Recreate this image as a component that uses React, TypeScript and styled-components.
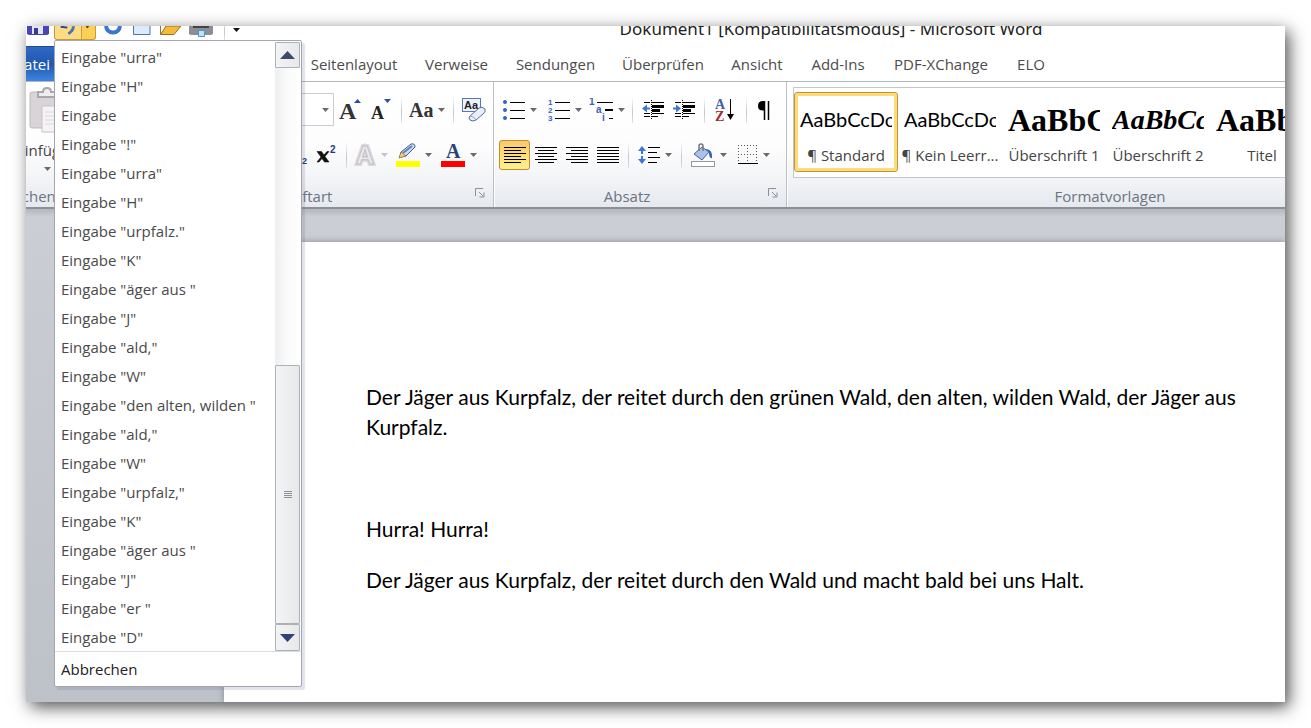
import React from "react";
import styled, { createGlobalStyle, css } from "styled-components";

const Global = createGlobalStyle`
  * { box-sizing: border-box; }
  body { margin: 0; background: #fff; font-family: "Open Sans", sans-serif; font-size: 15px; color: #444; }
  button { font: inherit; color: inherit; border: 0; background: none; padding: 0; }
`;

const Backdrop = styled.div`
  min-height: 100vh;
  padding: 26px;
  display: flex;
  overflow: hidden;
`;

const AppWindow = styled.div`
  position: relative;
  flex: 1;
  min-width: 0;
  display: flex;
  flex-direction: column;
  background: #fff;
  box-shadow: 4px 5px 16px rgba(0, 0, 0, 0.68);
`;

const TitleBar = styled.header`
  height: 15px;
  display: flex;
  align-items: flex-end;
  overflow: hidden;
`;

const QuickAccess = styled.div`
  flex: none;
  width: 351px;
  height: 15px;
  display: flex;
  align-items: flex-end;
  gap: 4px;
`;

const QuickButton = styled.button<{ $w?: number }>`
  flex: none;
  width: ${(p) => p.$w ?? 25}px;
  height: 15px;
  display: flex;
  justify-content: center;
  align-items: flex-start;
  overflow: hidden;
`;

const UndoButton = styled(QuickButton)`
  height: 14px;
  margin-bottom: 1px;
  border: 1px solid #c69a3c;
  border-top: 0;
  border-radius: 0 0 3px 3px;
  background: linear-gradient(90deg, #fbdc84 0 26px, #cf9f3a 26px 27px, #fdcf55 27px);
`;

const Title = styled.h1`
  flex: 1;
  margin: 0;
  text-align: center;
  font-family: "Noto Sans", sans-serif;
  font-size: 17px;
  line-height: 24px;
  height: 24px;
  font-weight: 400;
  color: #222;
  white-space: nowrap;
`;

const TabBar = styled.nav`
  display: flex;
  height: 41px;
  padding-top: 5px;
  border-bottom: 1px solid #b3b6bd;
  overflow: hidden;
`;

const Tab = styled.a<{ $w: number }>`
  flex: none;
  width: ${(p) => p.$w}px;
  line-height: 37px;
  text-align: center;
  text-decoration: none;
  white-space: nowrap;
  color: #4c4c4c;
`;

const FileTab = styled(Tab)`
  display: flex;
  justify-content: flex-end;
  padding-right: 4px;
  line-height: 35px;
  color: #fff;
  border-top: 1px solid #1d4a94;
  background: linear-gradient(#2f69c4, #2057b0 50%, #3c86e0);
`;

const Ribbon = styled.section`
  height: 127px;
  display: flex;
  overflow: hidden;
  border-bottom: 2px solid #8b9097;
  background: linear-gradient(#fff, #fdfdfe 50%, #f4f5f7 75%, #e5e9ee);
`;

const Group = styled.div<{ $w: number; $grow?: boolean }>`
  flex: ${(p) => (p.$grow ? "1 0 auto" : "none")};
  width: ${(p) => p.$w}px;
  display: flex;
  flex-direction: column;
  border-right: 1px solid #bcc0c7;
  box-shadow: 1px 0 #fff;
`;

const GroupBody = styled.div`
  flex: 1;
  padding-top: 5px;
`;

const GroupFooter = styled.div`
  height: 22px;
  display: flex;
  align-items: center;
`;

const GroupLabel = styled.span`
  flex: 1;
  min-width: 0;
  display: flex;
  justify-content: center;
  line-height: 22px;
  white-space: nowrap;
  color: #6c7482;
`;

const Launcher = styled.button`
  width: 26px;
  height: 16px;
  display: flex;
  justify-content: center;
`;

const Row = styled.div<{ $end?: boolean; $pad?: number }>`
  height: 45px;
  display: flex;
  align-items: center;
  justify-content: ${(p) => (p.$end ? "flex-end" : "flex-start")};
  padding: 0 ${(p) => (p.$end ? p.$pad ?? 0 : 0)}px 0 ${(p) => (p.$end ? 0 : p.$pad ?? 0)}px;
`;

const ToolButton = styled.button<{ $w: number; $active?: boolean }>`
  flex: none;
  width: ${(p) => p.$w}px;
  height: 30px;
  display: flex;
  align-items: center;
  justify-content: center;
  gap: 5px;
  border-radius: 3px;
  ${(p) =>
    p.$active &&
    css`
      border: 1px solid #c08c35;
      background: linear-gradient(#fbc868, #fde27c 60%, #fff08e);
    `}
`;

const Separator = styled.span`
  flex: none;
  width: 10px;
  height: 27px;
  background: linear-gradient(#fff, #c3c7cd 60%, #dfe1e5) center / 1px 100% no-repeat;
`;

const SizeSelect = styled.button`
  width: 64px;
  height: 33px;
  border: 1px solid #c9ccd1;
  background: #fff;
  display: flex;
  align-items: center;
  justify-content: flex-end;
  padding-right: 4px;
`;

const PasteButton = styled.button`
  width: 42px;
  height: 90px;
  display: flex;
  flex-direction: column;
  align-items: center;
  line-height: 20px;
  gap: 7px;
  white-space: nowrap;
`;

const ClippedLabel = styled(GroupLabel)`
  justify-content: flex-end;
  padding-right: 30px;
`;

const Gallery = styled.div`
  height: 91px;
  margin-left: 6px;
  display: flex;
  padding-top: 4px;
  border: 1px solid #c3c7cc;
  border-right: 0;
  background: #fff;
`;

const StyleItem = styled.button<{ $selected?: boolean }>`
  flex: none;
  width: 104px;
  height: 80px;
  padding: 4px;
  display: flex;
  flex-direction: column;
  align-items: center;
  border: 1px solid ${(p) => (p.$selected ? "#c0933c" : "transparent")};
  border-radius: 3px;
  box-shadow: ${(p) => (p.$selected ? "inset 0 0 0 3px #fddc78" : "none")};
  white-space: nowrap;
`;

const Preview = styled.span<{ $kind: string }>`
  width: 92px;
  height: 46px;
  overflow: hidden;
  text-align: left;
  line-height: 44px;
  color: #000;
  font-family: Lato, sans-serif;
  font-size: 20px;
  ${(p) =>
    p.$kind !== "body" &&
    css`
      line-height: 46px;
      font-family: "Liberation Serif", serif;
      font-weight: 700;
      font-size: ${p.$kind === "h2" ? 28 : 32}px;
      font-style: ${p.$kind === "h2" ? "italic" : "normal"};
    `}
`;

const StyleName = styled.span`
  line-height: 24px;
`;

const Workspace = styled.main`
  flex: 1;
  display: flex;
  padding: 33px 0 0 198px;
  background: linear-gradient(#b4b8be, #cbced4 8px, #c9ccd2 60px, #bdc1c8);
`;

const Page = styled.article`
  flex: 1;
  padding: 140px 40px 40px 142px;
  background: #fff;
  box-shadow: 0 0 6px #85898f;
  font-family: Lato, sans-serif;
  font-size: 21px;
  line-height: 30px;
  color: #000;
`;

const Paragraph = styled.p`
  margin: 0 0 21px;
  min-height: 30px;
`;

const UndoMenu = styled.div`
  position: absolute;
  left: 28px;
  top: 14px;
  width: 248px;
  border: 1px solid #a3a6b1;
  border-radius: 2px;
  background: #fff;
  box-shadow: 3px 3px 1px rgba(110, 110, 150, 0.2);
`;

const MenuBody = styled.div`
  display: flex;
  padding: 1px 1px 0 0;
  border-bottom: 1px solid #dcdde0;
`;

const EntryList = styled.ul`
  flex: 1;
  margin: 0;
  padding: 0;
  list-style: none;
`;

const Entry = styled.button`
  display: block;
  width: 100%;
  height: 29px;
  padding-left: 6px;
  text-align: left;
  line-height: 30px;
  white-space: pre;
  color: #4a4a4a;
`;

const Cancel = styled(Entry)`
  height: 34px;
  line-height: 34px;
  color: #222;
`;

const ScrollBar = styled.div`
  width: 25px;
  display: flex;
  flex-direction: column;
  background: linear-gradient(90deg, #eeeff0, #fafafa 50%, #fff);
`;

const ScrollPart = styled.button<{ $h: number }>`
  height: ${(p) => p.$h}px;
  display: flex;
  align-items: center;
  justify-content: center;
  border: 1px solid #acb0b8;
  border-radius: 1px;
  background: linear-gradient(90deg, #f3f4f5, #e6e8e9);
`;

const Track = styled.div`
  flex: 1;
`;

const Caret = ({ c = "#6b6b6b" }: { c?: string }) => (
  <svg width="7" height="4" viewBox="0 0 7 4"><path d="M0 0H7L3.5 4Z" fill={c} /></svg>
);

const Tool = ({ w, label, caret, active, caretColor, children }: {
  w: number; label: string; caret?: boolean; active?: boolean; caretColor?: string; children: React.ReactNode;
}) => (
  <ToolButton $w={w} $active={active} aria-label={label}>
    {children}
    {caret && <Caret c={caretColor} />}
  </ToolButton>
);

const serif = "Liberation Serif, serif";
const sans = "Liberation Sans, sans-serif";

const Lines = ({ rows }: { rows: [number, number][] }) => (
  <svg width="22" height="18" viewBox="0 0 22 18">
    {rows.map(([a, b], i) => (
      <rect key={i} x={a} y={i * 3 + 1} width={b - a} height="1" fill="#000" />
    ))}
  </svg>
);

const Indent = ({ right }: { right?: boolean }) => (
  <svg width="22" height="22" viewBox="0 0 22 22">
    <path d="M2 3.500H8M10 3.500H22M2 14.500H8M10 14.500H22M2 17.500H8M10 17.500H16" stroke="#000" />
    <path d="M10 7.500h12M10 11.500h8" stroke="#000" strokeWidth="3" />
    <path d="M9.500 1v20" stroke="#000" strokeDasharray="1 1" />
    {right
      ? <path d="M0 8.500H3V5.500L8 9.500 3 13.500V10.500H0Z" fill="#3f78cf" />
      : <path d="M8 8.500H5V5.500L0 9.500 5 13.500V10.500H8Z" fill="#3f78cf" />}
  </svg>
);

const LauncherIcon = () => (
  <svg width="10" height="10" viewBox="0 0 10 10" fill="none" stroke="#8a8f98">
    <path d="M.5 8V.5H8M4 4L8 8M9 4.500V9H4.500" />
  </svg>
);

const entries = [
  'Eingabe "urra"', 'Eingabe "H"', "Eingabe", 'Eingabe "!"', 'Eingabe "urra"', 'Eingabe "H"',
  'Eingabe "urpfalz."', 'Eingabe "K"', 'Eingabe "äger aus "', 'Eingabe "J"', 'Eingabe "ald,"',
  'Eingabe "W"', 'Eingabe "den alten, wilden "', 'Eingabe "ald,"', 'Eingabe "W"',
  'Eingabe "urpfalz,"', 'Eingabe "K"', 'Eingabe "äger aus "', 'Eingabe "J"', 'Eingabe "er "', 'Eingabe "D"',
];

const tabs: [string, number][] = [
  ["Start", 112], ["Einfügen", 131], ["Seitenlayout", 114], ["Verweise", 91], ["Sendungen", 107],
  ["Überprüfen", 108], ["Ansicht", 80], ["Add-Ins", 82], ["PDF-XChange", 124], ["ELO", 56],
];

const styles = [
  { kind: "body", sample: "AaBbCcDc", name: "¶ Standard" },
  { kind: "body", sample: "AaBbCcDc", name: "¶ Kein Leerr..." },
  { kind: "h1", sample: "AaBbC", name: "Überschrift 1" },
  { kind: "h2", sample: "AaBbCc", name: "Überschrift 2" },
  { kind: "h1", sample: "AaBbC", name: "Titel" },
];

export default function App() {
  return (
    <>
      <Global />
      <Backdrop>
        <AppWindow>
          <TitleBar>
            <QuickAccess>
              <QuickButton $w={24} aria-label="Speichern">
                <svg width="22" height="10" viewBox="0 0 22 10">
                  <path d="M0 0H22V8L20 9H2L0 8Z" fill="#4b44b4" />
                  <path d="M5 0H16V8H5Z" fill="#dfe6f8" /><path d="M7 2h4v6H7z" fill="#3a3a8c" />
                </svg>
              </QuickButton>
              <UndoButton $w={42} aria-label="Rückgängig">
                <svg width="42" height="10" viewBox="0 0 42 10">
                  <path d="M6 .5L13 1.500" stroke="#2a3f9e" strokeWidth="2" />
                  <path d="M19 0Q20 4 14 8" fill="none" stroke="#4a72b8" strokeWidth="3" />
                  <path d="M32 0h4l-2 2z" fill="#222" />
                </svg>
              </UndoButton>
              <QuickButton aria-label="Wiederholen">
                <svg width="20" height="10" viewBox="0 0 20 10">
                  <path d="M3 0Q4 6.500 10 6.500T17 0" fill="none" stroke="#3b75cf" strokeWidth="4" />
                </svg>
              </QuickButton>
              <QuickButton aria-label="Neu">
                <svg width="18" height="10" viewBox="0 0 18 10"><path d="M.5 0V8.500H17V0" fill="#dcebfb" stroke="#4b74b5" /></svg>
              </QuickButton>
              <QuickButton aria-label="Öffnen">
                <svg width="22" height="10" viewBox="0 0 22 10"><path d="M.5 0V8.500H14L21 0H6L1 8" fill="#f2bb3c" stroke="#9a6e1c" /></svg>
              </QuickButton>
              <QuickButton $w={28} aria-label="Drucken">
                <svg width="24" height="11" viewBox="0 0 24 11">
                  <path d="M0 0H24V8L22 9H2L0 8Z" fill="#8b8e94" /><path d="M4 0h16v2H4z" fill="#444" />
                  <path d="M9.500 4.500h6v6h-6z" fill="#bfe2f7" stroke="#4a94c8" />
                </svg>
              </QuickButton>
              <Separator />
              <QuickButton $w={7} aria-label="Anpassen">
                <svg width="7" height="6" viewBox="0 0 7 6"><path d="M0 2H7L3.500 6Z" fill="#111" /></svg>
              </QuickButton>
            </QuickAccess>
            <Title>Dokument1 [Kompatibilitätsmodus] - Microsoft Word</Title>
          </TitleBar>

          <TabBar>
            <FileTab $w={28} href="#datei">Datei</FileTab>
            {tabs.map(([name, w]) => <Tab key={name} $w={w} href={"#" + name}>{name}</Tab>)}
          </TabBar>

          <Ribbon>
            <Group $w={107}>
              <GroupBody>
                <PasteButton>
                  <svg width="36" height="46" viewBox="0 0 36 46">
                    <rect x="1" y="5" width="32" height="36" rx="2" fill="#d8d4d8" stroke="#bdb9be" />
                    <path d="M9 10V5H14Q14 1 18 1T22 5H27V10Z" fill="#eee" stroke="#aaa7ac" strokeWidth="2" />
                    <path d="M13 19H35V45H13Z" fill="#f6f3f7" stroke="#c7c2ca" />
                    <path d="M16 25H35M16 29H35M16 33H35M16 37H35" stroke="#d9d5dc" />
                  </svg>
                  Einfügen
                  <Caret />
                </PasteButton>
              </GroupBody>
              <GroupFooter><ClippedLabel>Zwischenablage</ClippedLabel></GroupFooter>
            </Group>

            <Group $w={361}>
              <GroupBody>
                <Row $end $pad={3}>
                  <SizeSelect aria-label="Schriftgrad"><Caret /></SizeSelect>
                  <Tool w={32} label="Schrift vergrößern">
                    <svg width="22" height="22" viewBox="0 0 22 22">
                      <text x="0" y="20" fontFamily={serif} fontWeight="700" fontSize="24" fill="#333">A</text>
                      <path d="M15 4h7l-3.500-4z" fill="#2b4fa8" />
                    </svg>
                  </Tool>
                  <Tool w={30} label="Schrift verkleinern">
                    <svg width="20" height="22" viewBox="0 0 20 22">
                      <text x="0" y="20" fontFamily={serif} fontWeight="700" fontSize="18" fill="#222">A</text>
                      <path d="M13 0h7l-3.500 4z" fill="#2b4fa8" />
                    </svg>
                  </Tool>
                  <Separator />
                  <Tool w={42} label="Groß-/Kleinschreibung" caret>
                    <svg width="24" height="20" viewBox="0 0 24 20">
                      <text x="0" y="17" fontFamily={serif} fontWeight="700" fontSize="20" fill="#333">Aa</text>
                    </svg>
                  </Tool>
                  <Separator />
                  <Tool w={32} label="Formatierung löschen">
                    <svg width="24" height="24" viewBox="0 0 24 24">
                      <rect x=".5" y=".5" width="18" height="13" fill="#edf3fc" stroke="#5877b8" />
                      <text x="2" y="11" fontFamily={sans} fontWeight="700" fontSize="11" fill="#222">Aa</text>
                      <path d="M8 18L17 10Q20 8 23 11Q24 14 21 16L14 22Q11 24 8 22Q6 20 8 18Z" fill="#e9eef8" stroke="#566f9e" />
                      <path d="M8 18Q12 18 14 22" fill="none" stroke="#8fa3c8" />
                    </svg>
                  </Tool>
                </Row>
                <Row $end $pad={12}>
                  <Tool w={20} label="Tiefgestellt">
                    <svg width="20" height="20" viewBox="0 0 20 20">
                      <text x="0" y="15" fontFamily={sans} fontWeight="700" fontSize="18" fill="#111">x</text>
                      <text x="12" y="19" fontFamily={sans} fontWeight="700" fontSize="9" fill="#26348c">2</text>
                    </svg>
                  </Tool>
                  <Tool w={31} label="Hochgestellt">
                    <svg width="20" height="20" viewBox="0 0 20 20">
                      <path d="M1 6.500H5.500L8 10 11 6.500H13L9 11.500 13 17H8.500L6 13.500 3 17H1L5 12Z" fill="#111" stroke="#111" strokeWidth=".6" />
                      <text x="14" y="8" fontFamily={sans} fontWeight="700" fontSize="10" fill="#26348c">2</text>
                    </svg>
                  </Tool>
                  <Separator />
                  <Tool w={40} label="Texteffekte" caret caretColor="#c4c4c8">
                    <svg width="22" height="24" viewBox="0 0 22 24">
                      <text x="2" y="21" fontFamily={sans} fontWeight="700" fontSize="25" fill="#e6e4e8" stroke="#dcdade" strokeWidth="4">A</text>
                      <text x="2" y="21" fontFamily={sans} fontWeight="700" fontSize="25" fill="#ececee" stroke="#c2c0c6">A</text>
                    </svg>
                  </Tool>
                  <Tool w={46} label="Texthervorhebungsfarbe" caret>
                    <svg width="24" height="24" viewBox="0 0 24 24">
                      <path d="M4 14L5 9 15 1Q19 0 19 4L10 13Z" fill="#cfdcf0" stroke="#3f5c92" />
                      <path d="M7 10L16 3" stroke="#5f82bd" strokeWidth="2" />
                      <path d="M3 15L5 9 10 13Z" fill="#f5cf84" stroke="#8f6b34" strokeWidth=".8" />
                      <rect y="18" width="24" height="6" fill="#ff0" />
                    </svg>
                  </Tool>
                  <Tool w={44} label="Schriftfarbe" caret>
                    <svg width="24" height="24" viewBox="0 0 24 24">
                      <text x="5" y="15" fontFamily={serif} fontWeight="700" fontSize="20" fill="#2a4379">A</text>
                      <rect y="18" width="24" height="6" fill="#f00" />
                    </svg>
                  </Tool>
                </Row>
              </GroupBody>
              <GroupFooter>
                <GroupLabel>Schriftart</GroupLabel>
                <Launcher aria-label="Schriftart-Dialog"><LauncherIcon /></Launcher>
              </GroupFooter>
            </Group>

            <Group $w={293}>
              <GroupBody>
                <Row $pad={3}>
                  <Tool w={46} label="Aufzählungszeichen" caret>
                    <svg width="22" height="22" viewBox="0 0 22 22">
                      {[3, 11, 19].map((y) => (
                        <g key={y}><circle cx="2" cy={y} r="2" fill="#3563c4" /><rect x="7" y={y} width="15" height="1" /></g>
                      ))}
                    </svg>
                  </Tool>
                  <Tool w={44} label="Nummerierung" caret>
                    <svg width="22" height="22" viewBox="0 0 22 22">
                      {[3, 11, 19].map((y, i) => (
                        <g key={y}>
                          <text x="0" y={y + 3} fontFamily={sans} fontWeight="700" fontSize="8" fill="#3563c4">{i + 1}</text>
                          <rect x="7" y={y} width="15" height="1" />
                        </g>
                      ))}
                    </svg>
                  </Tool>
                  <Tool w={40} label="Liste mit mehreren Ebenen" caret>
                    <svg width="24" height="24" viewBox="0 0 24 24">
                      <g fontFamily={sans} fontWeight="700" fontSize="10" fill="#3f62b0">
                        <text x="0" y="7">1</text><text x="7" y="15">a</text><text x="13" y="23">i</text>
                      </g>
                      <path d="M8 4.500H24M20 20.500H24" stroke="#000" /><path d="M16 12H24" stroke="#000" strokeWidth="2" />
                    </svg>
                  </Tool>
                  <Separator />
                  <Tool w={31} label="Einzug verkleinern"><Indent /></Tool>
                  <Tool w={31} label="Einzug vergrößern"><Indent right /></Tool>
                  <Separator />
                  <Tool w={32} label="Sortieren">
                    <svg width="20" height="24" viewBox="0 0 20 24">
                      <text x="0" y="11" fontFamily={serif} fontSize="14" fontWeight="700" fill="#3f62a8">A</text>
                      <text x="0" y="23" fontFamily={serif} fontSize="14" fontWeight="700" fill="#9c2b2b">Z</text>
                      <path d="M15.500 1V18" stroke="#000" /><path d="M12 16H19L15.500 22Z" />
                    </svg>
                  </Tool>
                  <Separator />
                  <Tool w={28} label="Absatzmarken">
                    <svg width="14" height="20" viewBox="0 0 14 20">
                      <path d="M14 1H5Q0 1 0 6T6 10.500V1" /><path d="M6.500 1V20M10.500 1V20" stroke="#000" strokeWidth="1.500" />
                    </svg>
                  </Tool>
                </Row>
                <Row $pad={5}>
                  <Tool w={31} label="Linksbündig" active><Lines rows={[[0, 22], [0, 17], [0, 22], [0, 17], [0, 22], [0, 17]]} /></Tool>
                  <Tool w={31} label="Zentriert"><Lines rows={[[0, 22], [3, 19], [0, 22], [3, 19], [0, 22], [3, 19]]} /></Tool>
                  <Tool w={31} label="Rechtsbündig"><Lines rows={[[0, 22], [5, 22], [0, 22], [5, 22], [0, 22], [5, 22]]} /></Tool>
                  <Tool w={31} label="Blocksatz"><Lines rows={[[0, 22], [0, 22], [0, 22], [0, 22], [0, 22], [0, 22]]} /></Tool>
                  <Separator />
                  <Tool w={43} label="Zeilenabstand" caret>
                    <svg width="22" height="20" viewBox="0 0 22 20">
                      <path d="M0 6L4 1 8 6H5V9H3V6ZM0 14H3V11H5V14H8L4 19Z" fill="#3f78cf" />
                      <path d="M10 2.500H22M10 7.500H19M10 12.500H22M10 17.500H19" stroke="#000" />
                    </svg>
                  </Tool>
                  <Separator />
                  <Tool w={46} label="Schattierung" caret>
                    <svg width="24" height="24" viewBox="0 0 24 24">
                      <path d="M3 11L11 4 18 9 11 17Z" fill="#a9c2ea" stroke="#4a6699" />
                      <path d="M8 8V3Q8 1 10 1T12 3V8" fill="none" stroke="#777" strokeWidth="1.500" />
                      <path d="M14 6Q22 6 21 15Q18 16 18 9Z" fill="#2f62bb" />
                      <rect x=".5" y="18.500" width="23" height="5" fill="#fff" stroke="#999" />
                    </svg>
                  </Tool>
                  <Tool w={44} label="Rahmen" caret>
                    <svg width="20" height="20" viewBox="0 0 20 20">
                      <path d="M0 .5H20M0 9.500H20M.5 0V18M9.500 0V18M18.500 0V18" stroke="#555" strokeDasharray="1 2" />
                      <rect y="18" width="20" height="1" />
                    </svg>
                  </Tool>
                </Row>
              </GroupBody>
              <GroupFooter>
                <GroupLabel>Absatz</GroupLabel>
                <Launcher aria-label="Absatz-Dialog"><LauncherIcon /></Launcher>
              </GroupFooter>
            </Group>

            <Group $w={647} $grow>
              <GroupBody>
                <Gallery>
                  {styles.map((s, i) => (
                    <StyleItem key={s.name} $selected={i === 0}>
                      <Preview $kind={s.kind}>{s.sample}</Preview>
                      <StyleName>{s.name}</StyleName>
                    </StyleItem>
                  ))}
                </Gallery>
              </GroupBody>
              <GroupFooter><GroupLabel>Formatvorlagen</GroupLabel></GroupFooter>
            </Group>
          </Ribbon>

          <Workspace>
            <Page>
              <Paragraph>
                Der Jäger aus Kurpfalz, der reitet durch den grünen Wald, den alten, wilden Wald, der Jäger aus
                Kurpfalz.
              </Paragraph>
              <Paragraph />
              <Paragraph>Hurra! Hurra!</Paragraph>
              <Paragraph>Der Jäger aus Kurpfalz, der reitet durch den Wald und macht bald bei uns Halt.</Paragraph>
            </Page>
          </Workspace>

          <UndoMenu>
            <MenuBody>
              <EntryList>
                {entries.map((e, i) => <li key={i}><Entry>{e}</Entry></li>)}
              </EntryList>
              <ScrollBar>
                <ScrollPart $h={26} aria-label="Nach oben">
                  <svg width="15" height="8" viewBox="0 0 15 8"><path d="M0 8L7.500 0 15 8Z" fill="#3d4a6e" /></svg>
                </ScrollPart>
                <Track />
                <ScrollPart $h={259} aria-label="Bildlauf">
                  <svg width="8" height="8" viewBox="0 0 8 8"><path d="M0 .5H8M0 2.500H8M0 4.500H8M0 6.500H8" stroke="#8d929a" /></svg>
                </ScrollPart>
                <ScrollPart $h={27} aria-label="Nach unten">
                  <svg width="15" height="8" viewBox="0 0 15 8"><path d="M0 0L7.500 8 15 0Z" fill="#2f4376" /></svg>
                </ScrollPart>
              </ScrollBar>
            </MenuBody>
            <Cancel>Abbrechen</Cancel>
          </UndoMenu>
        </AppWindow>
      </Backdrop>
    </>
  );
}
